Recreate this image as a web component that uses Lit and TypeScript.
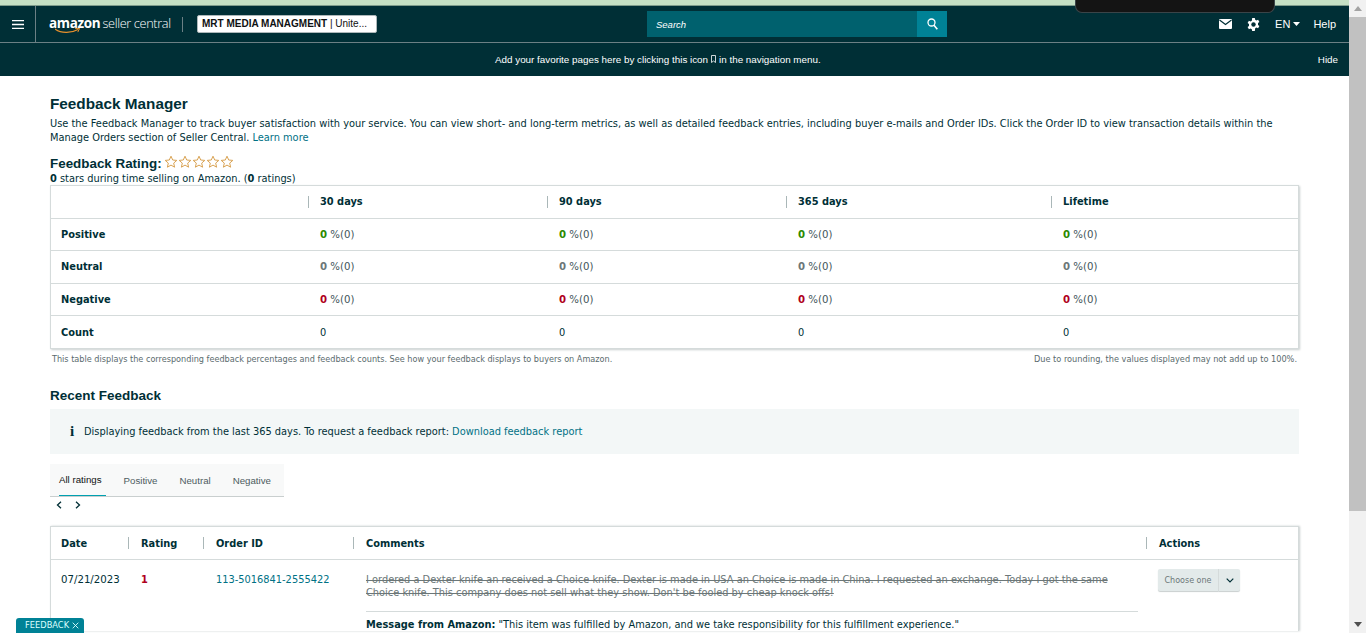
import { LitElement, css, html } from "lit";
import { customElement } from "lit/decorators.js";

const ratingRows = [
  { label: "Positive", tone: "pos" },
  { label: "Neutral", tone: "neu" },
  { label: "Negative", tone: "neg" },
];

const star = html`<svg class="star" viewBox="0 0 14 14" width="14" height="14">
  <path d="M7 1.2l1.7 3.8 4.1.4-3.1 2.7.9 4.1L7 10.1l-3.6 2.1.9-4.1L1.2 5.4l4.1-.4z" fill="#fff" stroke="#d9a354" stroke-width="1"></path>
</svg>`;

@customElement("app-root")
export class AppRoot extends LitElement {
  static styles = css`
    :host {
      display: flex;
      height: 633px;
      overflow: hidden;
      position: relative;
      background: #fff;
      font-family: "DejaVu Sans", Verdana, sans-serif;
      font-size: 9.84px;
      color: #0f1111;
    }
    a { color: #007185; text-decoration: none; }
    .page { flex: 1; min-width: 0; display: flex; flex-direction: column; }
    .strip { height: 6px; flex: none; background: #c5e0c5; border-bottom: 1px solid #7f9c8c; box-sizing: border-box; }

    .topbar { background: #002f36; color: #fff; height: 70px; flex: none; font-family: "Liberation Sans", Arial, sans-serif; }
    .nav { height: 37px; box-sizing: border-box; border-bottom: 1px solid #6c8085; display: flex; align-items: center; }
    .burger { width: 36px; height: 36px; box-sizing: border-box; border-right: 1px solid #6c8085; display: flex; align-items: center; justify-content: center; }
    .logo { position: relative; margin-left: 13px; width: 120px; height: 24px; font-family: "Open Sans", sans-serif; line-height: 22px; white-space: nowrap; letter-spacing: -0.35px; }
    .logo b { font-weight: 700; font-size: 13.5px; }
    .logo span { font-weight: 300; font-size: 12.7px; }
    .logo svg { position: absolute; left: 6px; top: 16px; }
    .vsep { width: 1px; height: 15px; background: #6c8085; margin: 0 14px 0 13px; }
    .account { width: 180px; height: 18px; box-sizing: border-box; background: #fff; color: #0f1111; border-radius: 2px; border: 1px solid #aeb8ba; font-size: 10px; line-height: 16px; padding: 0 4px; white-space: nowrap; }
    .search { display: flex; width: 300px; height: 26px; margin-left: 270px; }
    .search-input { flex: 1; background: #00616e; font-size: 9.5px; font-style: italic; line-height: 27px; padding-left: 9px; }
    .search-btn { width: 30px; background: #008296; display: flex; align-items: center; justify-content: center; }
    .nav-right { margin-left: auto; display: flex; align-items: center; padding-right: 13px; font-size: 11px; }
    .nav-right svg { display: block; }
    .lang { margin-left: 15px; display: flex; align-items: center; gap: 3px; }
    .help { margin-left: 13px; }
    .favbar { height: 32px; display: flex; align-items: center; font-size: 9.84px; padding: 0 11px 0 495px; }
    .favbar svg { margin: 0 3px; }
    .favbar .hide { margin-left: auto; }

    .content { padding: 20px 50px 0 50px; }
    h1 { font-family: "Liberation Sans", sans-serif; font-size: 15.3px; font-weight: 700; margin: 0; line-height: 16px; color: #002f36; }
    .intro { margin: 5px 0 0; line-height: 14px; color: #002f36; }
    .rating-title { display: flex; align-items: center; margin-top: 10px; height: 16px; font-family: "Liberation Sans", sans-serif; font-weight: 700; font-size: 13.4px; color: #002f36; }
    .stars { display: flex; margin-left: 2px; margin-top: -3px; }
    .star { display: block; }
    .stars-note { line-height: 14px; margin-top: 1px; margin-bottom: -1px; color: #002f36; }
    .stars-note b { font-weight: 700; }

    .card { border: 1px solid #d5dbdb; box-shadow: 1px 1px 2px #c9cfcf; }
    .metrics { display: grid; grid-template-columns: 258px 239px 239px 265px 1fr; }
    .metrics > div { height: 32.5px; box-sizing: border-box; border-bottom: 1px solid #d5dbdb; display: flex; align-items: center; padding-left: 11px; color: #002f36; }
    .metrics > div.last { height: 32px; border-bottom: none; }
    .metrics .head, .fb-head > div { font-weight: 700; position: relative; }
    .metrics .head.sep::before, .fb-head > div.sep::before { content: ""; position: absolute; left: 0; top: 50%; height: 12px; margin-top: -6px; width: 1px; background: #aab7b8; }
    .metrics .head.sep::before { left: -1px; }
    .metrics .row-label { font-weight: 700; padding-left: 10px; }
    .pos { color: #2c8a00; font-weight: 700; }
    .neu { color: #6c7778; font-weight: 700; }
    .neg { color: #b00020; font-weight: 700; }
    .pct { white-space: pre; color: #44565a; font-size: 10.2px; }
    .notes { display: flex; justify-content: space-between; padding: 5px 2px 0; font-size: 8.15px; line-height: 10px; color: #5a6b6e; }
    .notes span:last-child { font-size: 8.2px; }

    h2 { font-family: "Liberation Sans", sans-serif; font-size: 13.5px; font-weight: 700; margin: 24px 0 0; line-height: 16px; color: #002f36; }
    .info { margin-top: 5px; height: 45px; background: #f3f7f7; display: flex; align-items: center; padding-left: 20px; color: #002f36; }
    .info .i { font-family: "Liberation Serif", serif; font-size: 15px; font-weight: 700; width: 14px; }
    .tabs { margin-top: 10px; width: 234px; height: 33px; box-sizing: border-box; background: #f8f9f9; border-bottom: 1px solid #c9cfcf; padding-left: 9px; display: flex; font-family: "Liberation Sans", sans-serif; font-size: 9.7px; color: #4d5c5f; }
    .tab { margin-right: 22px; display: flex; align-items: center; white-space: nowrap; }
    .tab.active { color: #0f1111; padding-right: 4px; margin-right: 18px; border-bottom: 1px solid #00a0b0; }
    .pager { display: flex; gap: 13px; height: 16px; align-items: center; padding-left: 6px; }

    .feedback { margin-top: 13px; border-bottom: none; box-shadow: 1px 0 2px #c9cfcf; }
    .fb-head, .fb-row { display: grid; grid-template-columns: 77px 75px 150px 793px 1fr; }
    .fb-head { height: 33px; border-bottom: 1px solid #d5dbdb; box-sizing: border-box; }
    .fb-head > div { display: flex; align-items: center; padding-left: 13px; color: #002f36; }
    .fb-head > div:first-child { padding-left: 10px; }
    .fb-row > div { padding: 13px 0 0 13px; line-height: 13px; color: #002f36; }
    .fb-row > div:first-child { padding-left: 10px; font-size: 10.2px; }
    .rating-1 { color: #b00020; font-weight: 700; }
    .struck { text-decoration: line-through; color: #6c7778; width: 772px; }
    .message { margin-top: 12px; padding-top: 6px; width: 772px; border-top: 1px solid #d5dbdb; white-space: nowrap; }
    .choose { width: 82px; height: 22px; background: #e3eaea; border-radius: 2px; box-shadow: 0 1px 1px #c9cfcf; display: flex; align-items: center; margin: -4px 0 0 -1px; font-size: 8px; color: #6c7778; }
    .choose span { flex: 1; text-align: center; border-right: 1px solid #d5dbdb; line-height: 23px; }
    .choose i { width: 21px; display: flex; justify-content: center; }

    .scrollbar { width: 17px; flex: none; background: #f1f1f1; display: flex; flex-direction: column; align-items: center; }
    .sb-end { height: 17px; flex: none; display: flex; align-items: center; justify-content: center; }
    .sb-thumb { width: 17px; height: 494px; background: #c1c1c1; flex: none; }
    .sb-end.bottom { margin-top: auto; }
    .notch { position: absolute; left: 1075px; top: 0; width: 200px; height: 13px; background: #141414; border: 1px solid #3a4448; border-top: none; border-radius: 0 0 7px 7px; box-sizing: border-box; }
    .fb-tab { position: absolute; left: 16px; bottom: 0; width: 68px; height: 15px; background: #008296; border-radius: 3px 3px 0 0; color: #dff; font-size: 8.3px; line-height: 15px; padding-left: 9px; box-sizing: border-box; display: flex; align-items: center; gap: 3px; }
  `;

  render() {
    return html`
      <div class="page">
        <div class="strip"></div>
        <div class="topbar">
          <div class="nav">
            <div class="burger">
              <svg width="12" height="9" viewBox="0 0 12 9"><path d="M0 .7h12M0 4.5h12M0 8.3h12" stroke="#fff" stroke-width="1.3"></path></svg>
            </div>
            <div class="logo"><b>amazon</b> <span>seller central</span>
              <svg width="26" height="7" viewBox="0 0 26 7"><path d="M0 1c6 4.5 16 4.5 23 .5" fill="none" stroke="#e8912d" stroke-width="1.3"></path><path d="M20 .3l4.5.2-1.7 3.6" fill="none" stroke="#e8912d" stroke-width="1"></path></svg>
            </div>
            <div class="vsep"></div>
            <div class="account"><b>MRT MEDIA MANAGMENT</b> | Unite...</div>
            <div class="search">
              <div class="search-input">Search</div>
              <div class="search-btn">
                <svg width="11" height="12" viewBox="0 0 11 12"><circle cx="4.5" cy="4.5" r="3.5" fill="none" stroke="#fff" stroke-width="1.3"></circle><path d="M7 7.3l3.3 3.9" stroke="#fff" stroke-width="1.6"></path></svg>
              </div>
            </div>
            <div class="nav-right">
              <svg width="13" height="10" viewBox="0 0 13 10"><rect width="13" height="10" rx="1" fill="#fff"></rect><path d="M.5 1l6 4.5 6-4.5" fill="none" stroke="#002f36" stroke-width="1.2"></path></svg>
              <svg style="margin-left:15px" width="13" height="13" viewBox="0 0 13 13"><path d="M5.2 0h2.6l.4 1.8 1.2.6 1.7-.7 1.3 2.2-1.4 1.2v1.8l1.4 1.2-1.3 2.2-1.7-.7-1.2.6L7.8 13H5.2l-.4-1.8-1.2-.6-1.7.7L.6 9.1 2 7.9V6.1L.6 4.9l1.3-2.2 1.7.7 1.2-.6z" fill="#fff"></path><circle cx="6.5" cy="6.5" r="2.2" fill="#002f36"></circle></svg>
              <div class="lang">EN <svg width="7" height="4" viewBox="0 0 7 4"><path d="M0 0h7L3.5 4z" fill="#fff"></path></svg></div>
              <div class="help">Help</div>
            </div>
          </div>
          <div class="favbar">
            Add your favorite pages here by clicking this icon
            <svg width="5" height="8" viewBox="0 0 5 8"><path d="M.5.5h4v7L2.5 6 .5 7.5z" fill="none" stroke="#fff" stroke-width=".8"></path></svg>
            in the navigation menu.
            <span class="hide">Hide</span>
          </div>
        </div>

        <div class="content">
          <h1>Feedback Manager</h1>
          <p class="intro">Use the Feedback Manager to track buyer satisfaction with your service. You can view short- and long-term metrics, as well as detailed feedback entries, including buyer e-mails and Order IDs. Click the Order ID to view transaction details within the Manage Orders section of Seller Central. <a>Learn more</a></p>
          <div class="rating-title">Feedback Rating: <span class="stars">${star}${star}${star}${star}${star}</span></div>
          <div class="stars-note"><b>0</b> stars during time selling on Amazon. (<b>0</b> ratings)</div>

          <div class="card metrics">
            <div class="head"></div>
            <div class="head sep">30 days</div>
            <div class="head sep">90 days</div>
            <div class="head sep">365 days</div>
            <div class="head sep">Lifetime</div>
            ${ratingRows.map(
              (r) => html`
                <div class="row-label">${r.label}</div>
                ${[0, 1, 2, 3].map(() => html`<div><span class="pct"><span class=${r.tone}>0</span> %(0)</span></div>`)}
              `
            )}
            <div class="row-label last">Count</div>
            ${[0, 1, 2, 3].map(() => html`<div class="last">0</div>`)}
          </div>
          <div class="notes">
            <span>This table displays the corresponding feedback percentages and feedback counts. See how your feedback displays to buyers on Amazon.</span>
            <span>Due to rounding, the values displayed may not add up to 100%.</span>
          </div>

          <h2>Recent Feedback</h2>
          <div class="info"><span class="i">i</span>Displaying feedback from the last 365 days. To request a feedback report:&nbsp;<a>Download feedback report</a></div>
          <div class="tabs">
            <div class="tab active">All ratings</div>
            <div class="tab">Positive</div>
            <div class="tab">Neutral</div>
            <div class="tab">Negative</div>
          </div>
          <div class="pager">
            <svg width="6" height="8" viewBox="0 0 6 8"><path d="M5 .8L1.5 4 5 7.2" fill="none" stroke="#002f36" stroke-width="1.3"></path></svg>
            <svg width="6" height="8" viewBox="0 0 6 8"><path d="M1 .8L4.5 4 1 7.2" fill="none" stroke="#002f36" stroke-width="1.3"></path></svg>
          </div>

          <div class="card feedback">
            <div class="fb-head">
              <div>Date</div>
              <div class="sep">Rating</div>
              <div class="sep">Order ID</div>
              <div class="sep">Comments</div>
              <div class="sep">Actions</div>
            </div>
            <div class="fb-row">
              <div>07/21/2023</div>
              <div><span class="rating-1">1</span></div>
              <div><a>113-5016841-2555422</a></div>
              <div>
                <div class="struck">I ordered a Dexter knife an received a Choice knife. Dexter is made in USA an Choice is made in China. I requested an exchange. Today I got the same Choice knife. This company does not sell what they show. Don't be fooled by cheap knock offs!</div>
                <div class="message"><b>Message from Amazon:</b> "This item was fulfilled by Amazon, and we take responsibility for this fulfillment experience."</div>
              </div>
              <div>
                <div class="choose"><span>Choose one</span><i><svg width="8" height="5" viewBox="0 0 8 5"><path d="M.7.7L4 4l3.3-3.3" fill="none" stroke="#002f36" stroke-width="1.2"></path></svg></i></div>
              </div>
            </div>
          </div>
        </div>
      </div>
      <div class="scrollbar">
        <div class="sb-end"><svg width="8" height="5" viewBox="0 0 8 5"><path d="M4 0l4 5H0z" fill="#a3a3a3"></path></svg></div>
        <div class="sb-thumb"></div>
        <div class="sb-end bottom"><svg width="8" height="5" viewBox="0 0 8 5"><path d="M0 0h8L4 5z" fill="#505050"></path></svg></div>
      </div>
      <div class="notch"></div>
      <div class="fb-tab">FEEDBACK <svg width="7" height="7" viewBox="0 0 7 7"><path d="M.7.7l5.6 5.6M6.3.7L.7 6.3" stroke="#dff" stroke-width=".9"></path></svg></div>
    `;
  }
}
